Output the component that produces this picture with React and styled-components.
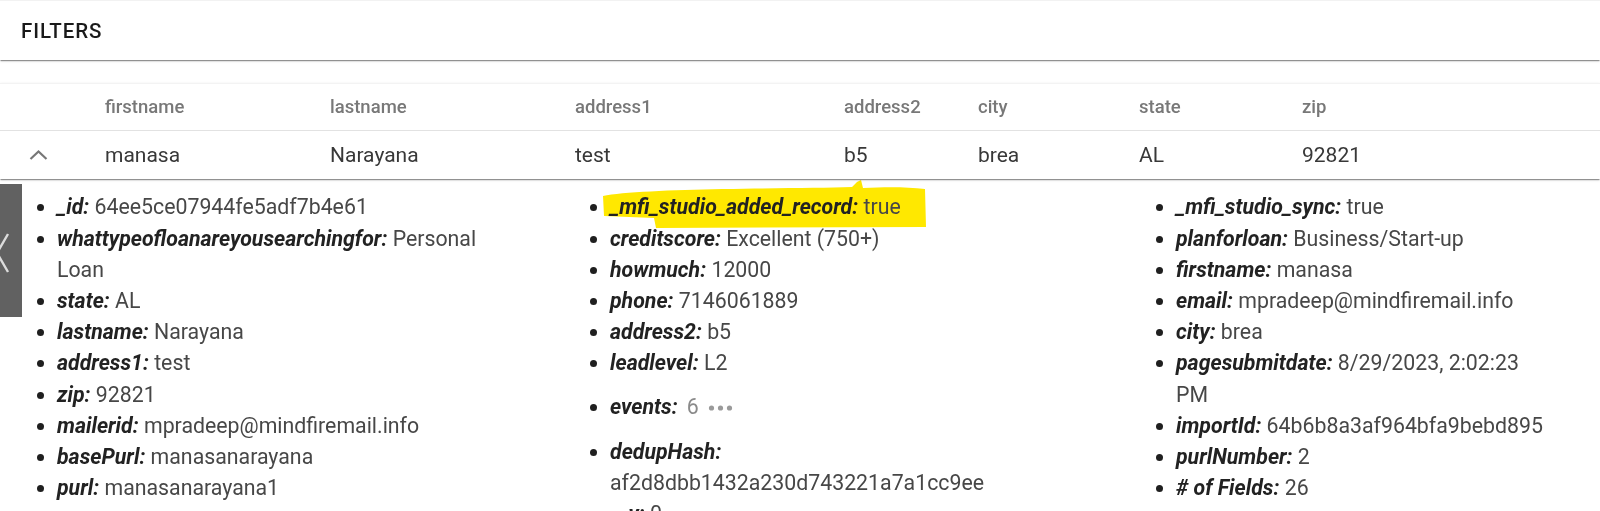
import React from 'react';
import styled, { createGlobalStyle } from 'styled-components';

const GlobalStyle = createGlobalStyle`
  html, body {
    margin: 0;
    padding: 0;
    background: #fff;
    font-family: Roboto, "Liberation Sans", Arial, sans-serif;
  }
`;

const Page = styled.div`
  width: 1600px;
  height: 511px;
  overflow: hidden;
  background: #fff;
`;

/* top filter bar */
const FilterBar = styled.div`
  height: 60px;
  display: flex;
  align-items: center;
  padding-left: 21px;
  background: #fff;
  border-top: 1px solid #f2f2f2;
  box-sizing: border-box;
  box-shadow: 0 2px 1px -1px rgba(0, 0, 0, 0.28), 0 1px 1px 0 rgba(0, 0, 0, 0.14), 0 1px 3px 0 rgba(0, 0, 0, 0.12);
`;

const FilterTitle = styled.span`
  font-size: 20.5px;
  font-weight: 500;
  letter-spacing: 0.9px;
  color: #1a1a1a;
  padding-top: 1px;
`;

const TablePaper = styled.div`
  margin-top: 23px;
  background: #fff;
  border-top: 1px solid #f3f3f3;
  box-shadow: 0 2px 1px -1px rgba(0, 0, 0, 0.28), 0 1px 1px 0 rgba(0, 0, 0, 0.14), 0 1px 3px 0 rgba(0, 0, 0, 0.12);
`;

const columnsTemplate = '105px 225px 245px 269px 134px 161px 163px 1fr';

const Row = styled.div`
  display: grid;
  grid-template-columns: ${columnsTemplate};
  align-items: center;
  height: ${(p) => p.$height}px;
  border-bottom: ${(p) => (p.$divider ? '1px solid #e2e2e2' : 'none')};
  box-sizing: border-box;
`;

const HeadCell = styled.div`
  font-size: 18.5px;
  font-weight: 500;
  color: #787878;
`;

const BodyCell = styled.div`
  font-size: 21px;
  color: #383838;
`;

const IconCell = styled.div`
  display: flex;
  align-items: center;
  padding-left: 29px;
  color: #777;
`;

const Detail = styled.div`
  display: flex;
  align-items: flex-start;
`;

const SideTab = styled.div`
  flex-shrink: 0;
  width: 22px;
  height: 133px;
  margin-top: 5px;
  background: #616161;
  overflow: hidden;
`;

const Columns = styled.div`
  flex: 1;
  display: grid;
  grid-template-columns: 553px 566px 1fr;
`;

const FieldList = styled.ul`
  margin: 12.4px 0 0;
  padding: 0 ${(p) => p.$padRight}px 0 35px;
  list-style: disc;
`;

const Field = styled.li`
  position: relative;
  font-size: 21.3px;
  line-height: 31.2px;
  color: #1f1f1f;
  padding: ${(p) => (p.$roomy ? '12px 0 14px' : '0')};
`;

const Label = styled.span`
  position: relative;
  font-weight: 700;
  font-style: italic;
  color: #222;
`;

const Value = styled.span`
  position: relative;
  color: ${(p) => (p.$muted ? '#8a8a8a' : '#474747')};
  margin-left: ${(p) => (p.$muted ? '9px' : '0')};
`;

const Dots = styled.svg`
  position: relative;
  margin-left: 9px;
  vertical-align: middle;
`;

const Marker = styled.svg`
  position: absolute;
  left: -8px;
  top: -11px;
  mix-blend-mode: multiply;
  pointer-events: none;
`;

function ChevronUp() {
  return (
    <svg width="19" height="12" viewBox="0 0 19 12">
      <polyline points="1.5,10 9.5,2.5 17.5,10" fill="none" stroke="currentColor" strokeWidth="2.2" />
    </svg>
  );
}

function TabChevron() {
  return (
    <svg width="22" height="133" viewBox="0 0 22 133">
      <polyline points="8,50 -3,69 8,88" fill="none" stroke="#dcdcdc" strokeWidth="2.4" />
    </svg>
  );
}

function Highlight() {
  return (
    <Marker width="326" height="50" viewBox="0 0 326 50">
      <path
        d="M1,16 C20,12 70,10 120,9 C180,8 220,8 250,7 L255,2 L259,0 L261,8 C285,7 305,7 323,9 L324,47 L54,48 L52,38 L2,36 Z"
        fill="#ffe800"
      />
    </Marker>
  );
}

const headers = ['firstname', 'lastname', 'address1', 'address2', 'city', 'state', 'zip'];
const values = ['manasa', 'Narayana', 'test', 'b5', 'brea', 'AL', '92821'];

const col1 = [
  ['_id', '64ee5ce07944fe5adf7b4e61'],
  ['whattypeofloanareyousearchingfor', 'Personal Loan'],
  ['state', 'AL'],
  ['lastname', 'Narayana'],
  ['address1', 'test'],
  ['zip', '92821'],
  ['mailerid', 'mpradeep@mindfiremail.info'],
  ['basePurl', 'manasanarayana'],
  ['purl', 'manasanarayana1'],
];

const col2 = [
  ['_mfi_studio_added_record', 'true', 'highlight'],
  ['creditscore', 'Excellent (750+)'],
  ['howmuch', '12000'],
  ['phone', '7146061889'],
  ['address2', 'b5'],
  ['leadlevel', 'L2'],
  ['events', '6', 'events'],
  ['dedupHash', 'af2d8dbb1432a230d743221a7a1cc9ee'],
  ['__v', '0'],
];

const col3 = [
  ['_mfi_studio_sync', 'true'],
  ['planforloan', 'Business/Start-up'],
  ['firstname', 'manasa'],
  ['email', 'mpradeep@mindfiremail.info'],
  ['city', 'brea'],
  ['pagesubmitdate', '8/29/2023, 2:02:23 PM'],
  ['importId', '64b6b8a3af964bfa9bebd895'],
  ['purlNumber', '2'],
  ['# of Fields', '26'],
];

function FieldItem({ name, value, kind }) {
  if (kind === 'events') {
    return (
      <Field $roomy>
        <Label>{name}:</Label>
        <Value $muted>{value}</Value>
        <Dots width="26" height="8" viewBox="0 0 26 8">
          <circle cx="3.5" cy="4" r="2.6" fill="#9a9a9a" />
          <circle cx="12.5" cy="4" r="2.6" fill="#9a9a9a" />
          <circle cx="21.5" cy="4" r="2.6" fill="#9a9a9a" />
        </Dots>
      </Field>
    );
  }
  return (
    <Field>
      {kind === 'highlight' && <Highlight />}
      <Label>{name}:</Label> <Value>{value}</Value>
    </Field>
  );
}

export default function App() {
  return (
    <Page>
      <GlobalStyle />
      <FilterBar>
        <FilterTitle>FILTERS</FilterTitle>
      </FilterBar>

      <TablePaper>
        <Row $height={47} $divider>
          <div />
          {headers.map((h) => (
            <HeadCell key={h}>{h}</HeadCell>
          ))}
        </Row>
        <Row $height={48}>
          <IconCell>
            <ChevronUp />
          </IconCell>
          {values.map((v, i) => (
            <BodyCell key={i}>{v}</BodyCell>
          ))}
        </Row>
      </TablePaper>

      <Detail>
        <SideTab>
          <TabChevron />
        </SideTab>
        <Columns>
          <FieldList $padRight={65}>
            {col1.map(([n, v]) => (
              <FieldItem key={n} name={n} value={v} />
            ))}
          </FieldList>
          <FieldList $padRight={101}>
            {col2.map(([n, v, k]) => (
              <FieldItem key={n} name={n} value={v} kind={k} />
            ))}
          </FieldList>
          <FieldList $padRight={51}>
            {col3.map(([n, v]) => (
              <FieldItem key={n} name={n} value={v} />
            ))}
          </FieldList>
        </Columns>
      </Detail>
    </Page>
  );
}
